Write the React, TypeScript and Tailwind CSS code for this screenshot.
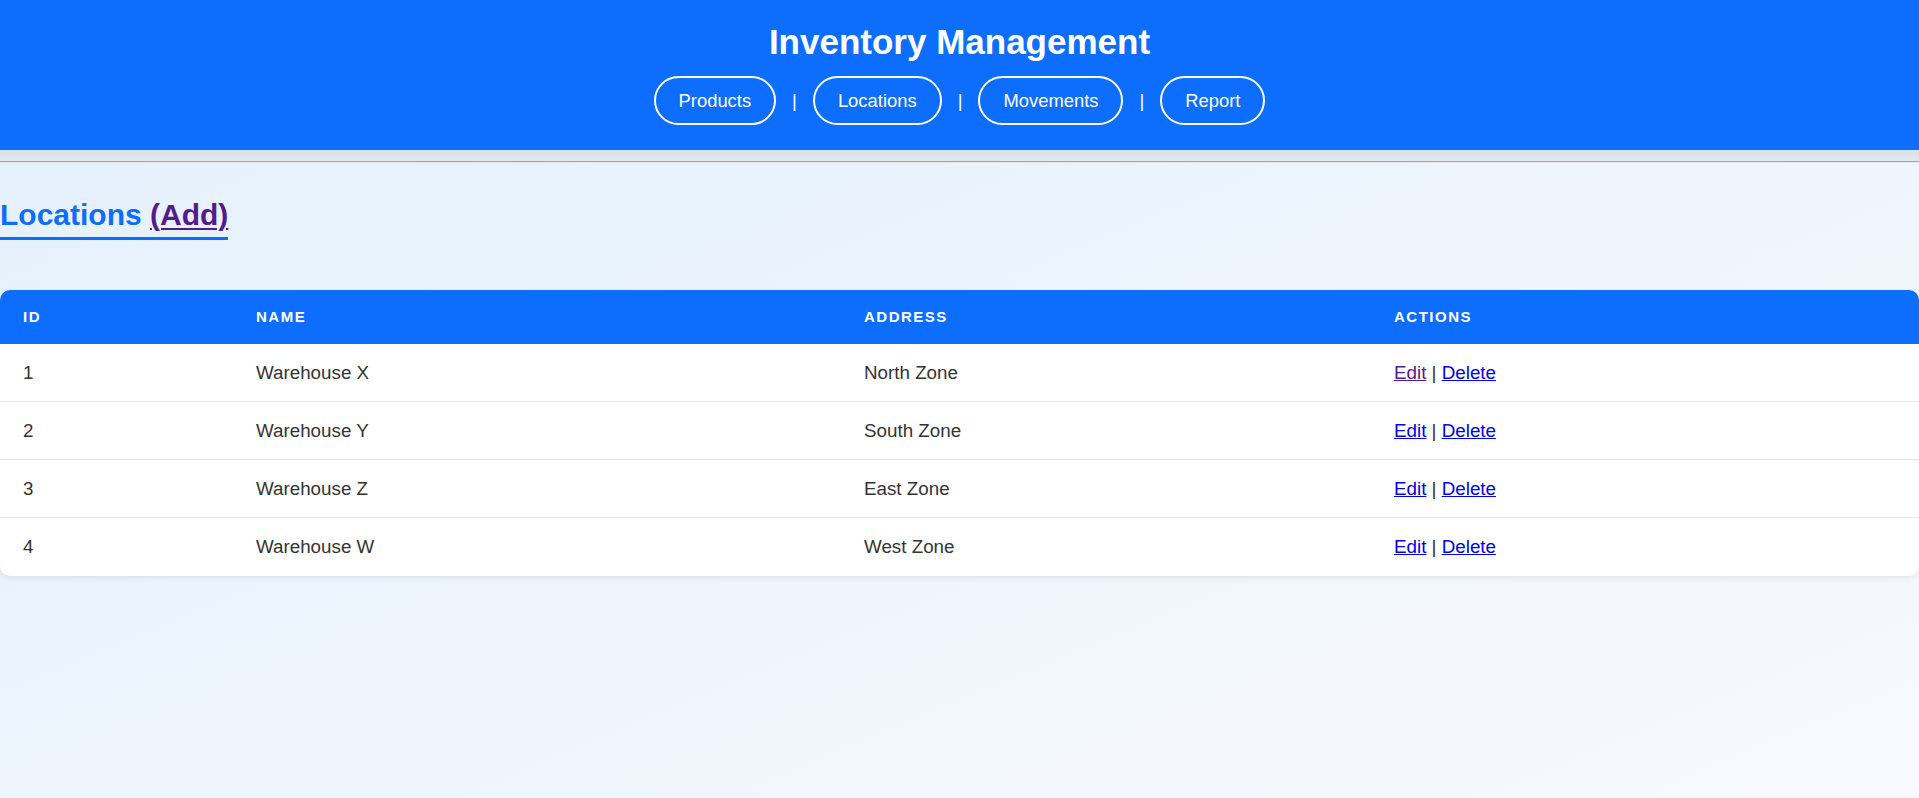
const navItems = ["Products", "Locations", "Movements", "Report"];

const locations = [
  { id: 1, name: "Warehouse X", address: "North Zone" },
  { id: 2, name: "Warehouse Y", address: "South Zone" },
  { id: 3, name: "Warehouse Z", address: "East Zone" },
  { id: 4, name: "Warehouse W", address: "West Zone" },
];

export default function App() {
  return (
    <div
      className="min-h-screen bg-gradient-to-br from-[#e3f0fc] to-[#f7f9fd] text-[#333]"
      style={{ fontFamily: '"Liberation Sans", Arial, sans-serif' }}
    >
      <header className="h-[150px] bg-[#0d6efd] text-white flex flex-col items-center pt-[22px]">
        <h1 className="text-[35px] leading-[40px] font-bold">Inventory Management</h1>
        <nav className="mt-[14px] flex items-center gap-[16px] text-[18.4px]">
          {navItems.map((item, i) => (
            <div key={item} className="flex items-center gap-[16px]">
              {i > 0 && <span>|</span>}
              <a className="block rounded-full border-2 border-white px-[23px] py-[12px] leading-[21px] text-white">
                {item}
              </a>
            </div>
          ))}
        </nav>
      </header>
      <div className="h-[11px] bg-gradient-to-b from-[#d7e0ea] to-[#e0e8f1]" />
      <div className="h-[2px] border-t border-[#a3a3a3] bg-[#e8e8e8]" />

      <h2 className="mt-[35px] inline-block border-b-[3px] border-[#0d6efd] pb-[4px] text-[30px] leading-[34.5px] font-bold text-[#0d6efd]">
        Locations{" "}
        <a className="text-[#551a8b] underline decoration-2 underline-offset-[3px]">(Add)</a>
      </h2>

      <div className="mt-[50px] overflow-hidden rounded-[10px] bg-white shadow-[0_2px_6px_rgba(0,0,0,0.08)]">
        <table className="w-full border-collapse text-left">
          <thead>
            <tr className="h-[54px] bg-[#0d6efd] text-white text-[15px] font-bold uppercase tracking-[1.5px]">
              <th className="w-[233px] pl-[23px] pt-[1px]">ID</th>
              <th className="w-[608px] pl-[23px] pt-[1px]">Name</th>
              <th className="w-[530px] pl-[23px] pt-[1px]">Address</th>
              <th className="pl-[23px] pt-[1px]">Actions</th>
            </tr>
          </thead>
          <tbody className="text-[18.8px]">
            {locations.map((loc, i) => (
              <tr
                key={loc.id}
                className={`h-[58px] ${i < locations.length - 1 ? "border-b border-[#e4e4e4]" : ""}`}
              >
                <td className="pl-[23px] pt-[1px]">{loc.id}</td>
                <td className="pl-[23px] pt-[1px]">{loc.name}</td>
                <td className="pl-[23px] pt-[1px]">{loc.address}</td>
                <td className="pl-[23px] pt-[1px]">
                  <a className={`underline ${i === 0 ? "text-[#551a8b]" : "text-[#0000ee]"}`}>Edit</a>
                  {" | "}
                  <a className="underline text-[#0000ee]">Delete</a>
                </td>
              </tr>
            ))}
          </tbody>
        </table>
      </div>
    </div>
  );
}
